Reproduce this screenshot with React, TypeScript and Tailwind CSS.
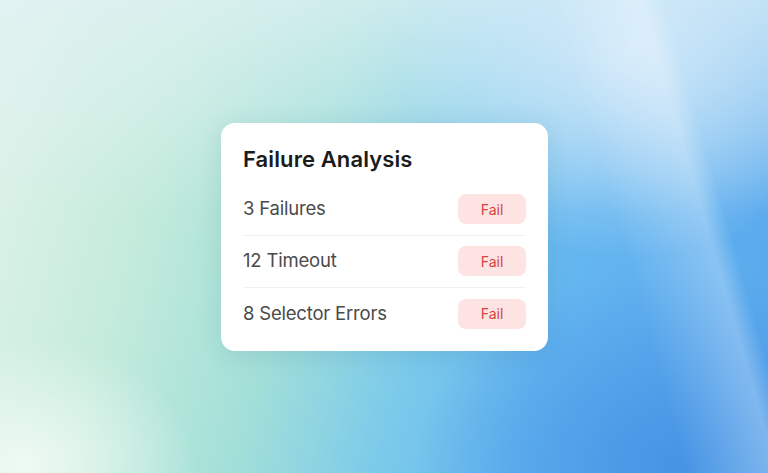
import React from "react";

const rows = ["3 Failures", "12 Timeout", "8 Selector Errors"];

export default function App() {
  return (
    <div
      className="w-[768px] h-[473px] flex items-center justify-center bg-[linear-gradient(74deg,rgba(255,255,255,0)_76%,rgba(255,255,255,0.28)_86%,rgba(255,255,255,0)_88.5%),radial-gradient(ellipse_30%_35%_at_3%_98%,rgba(240,250,244,0.95),rgba(240,250,244,0)_75%),radial-gradient(ellipse_40%_60%_at_82%_10%,rgba(214,235,250,0.85),rgba(214,235,250,0)_75%),linear-gradient(180deg,rgba(225,242,245,0.7)_0%,rgba(225,242,245,0)_45%),radial-gradient(ellipse_45%_55%_at_88%_98%,rgba(68,145,228,0.9),rgba(68,145,228,0)_75%),linear-gradient(105deg,#e2f3ea_0%,#c4ebdc_22%,#a2dfd8_40%,#7ccaea_56%,#64b6f0_72%,#58a6ec_100%)]"
      style={{ fontFamily: "Inter, 'Noto Sans', sans-serif" }}
    >
      <div className="w-[327px] bg-white rounded-[14px] pt-[22px] pb-[11px] px-[22px] shadow-[0_4px_24px_rgba(40,90,120,0.12)] ml-[1px]">
        <h2 className="text-[22px] leading-[28px] font-semibold text-[#1b1b1b] tracking-[0.1px]">
          Failure Analysis
        </h2>
        <div className="mt-[11px] flex flex-col">
          {rows.map((r, i) => (
            <div
              key={r}
              className={
                "flex items-center justify-between h-[52px] " +
                (i < rows.length - 1 ? "border-b border-[#f1f1f1]" : "")
              }
            >
              <span className="text-[18.5px] text-[#4a4a4a] font-normal tracking-[-0.2px]">
                {r}
              </span>
              <span className="w-[68px] h-[30px] rounded-[8px] bg-[#fde4e2] text-[#d2453f] text-[14px] flex items-center justify-center">
                Fail
              </span>
            </div>
          ))}
        </div>
      </div>
    </div>
  );
}
